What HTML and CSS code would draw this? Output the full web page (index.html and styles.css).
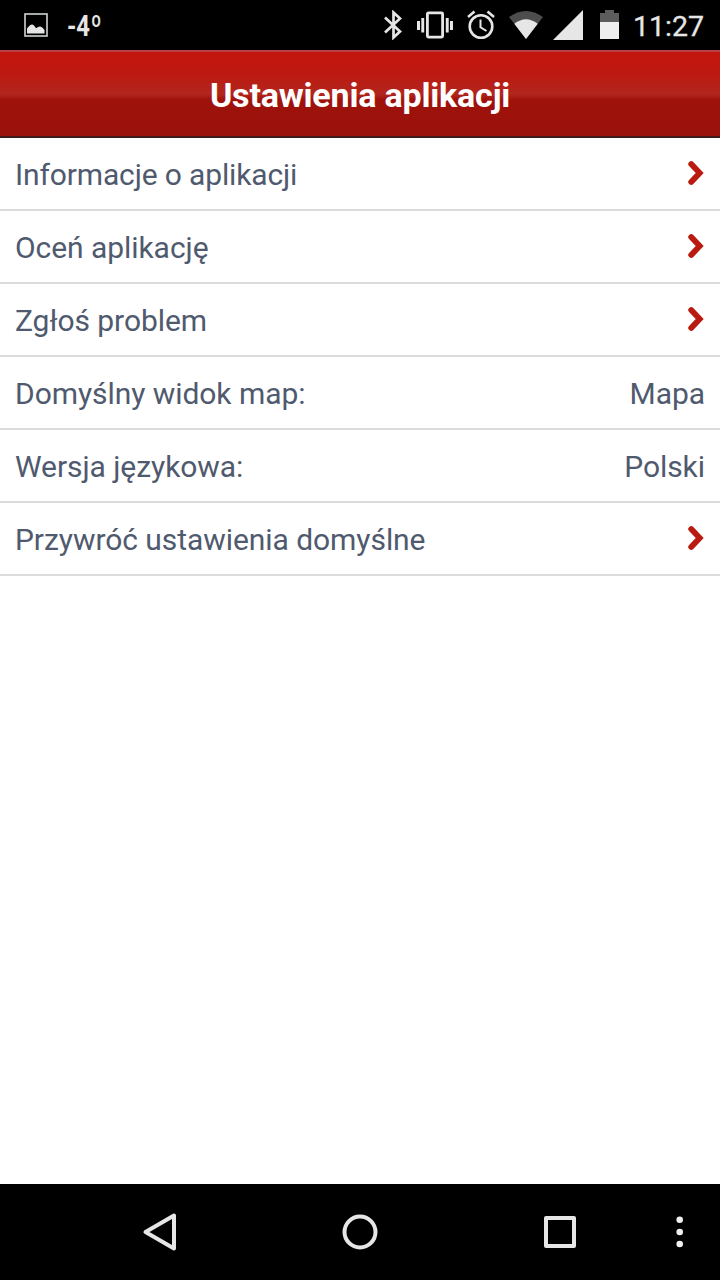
FILE: index.html
```html
<!DOCTYPE html>
<html lang="pl">
<head>
<meta charset="utf-8">
<title>Ustawienia aplikacji</title>
<link rel="stylesheet" href="styles.css">
</head>
<body>
<div class="screen">
  <div class="status">
    <div class="notifications">
      <svg class="icon" width="24" height="24" viewBox="0 0 24 24"><rect x="1" y="1" width="22" height="22" fill="none" stroke="#c4c8c4" stroke-width="1.7"/><path d="M3 20.500V15.500Q6 11.500 8 11.500T12 15.300Q15 13 17 13.800T20.500 17v3.500z" fill="#e6e6e6"/></svg>
      <span class="temp">-4<span class="degree">º</span></span>
    </div>
    <div class="system">
      <svg class="icon bluetooth" width="18" height="30" viewBox="0 0 18 30"><path d="M1 7.500l15 14-6.500 6V2.500l6.500 6-15 14" fill="none" stroke="#e6e6e6" stroke-width="2.700"/></svg>
      <svg class="icon vibrate" width="36" height="30" viewBox="0 0 36 30" fill="#e6e6e6"><rect x="10.400" y="2.900" width="15.200" height="24.200" rx="1" fill="none" stroke="#e6e6e6" stroke-width="2.800"/><path d="M0 11h3v9H0zM4.300 8h2.900v14.500H4.300zM28.800 8h2.900v14.500h-2.900zM33 11h3v9h-3z"/></svg>
      <svg class="icon alarm" width="28" height="30" viewBox="0 0 28 30" fill="none" stroke="#e6e6e6" stroke-width="2.600"><circle cx="14" cy="16.500" r="11.300"/><path d="M1 7l6.500-5.400M27 7l-6.500-5.400"/><path d="M13.500 9.500v7.800l6 3.700" stroke-width="2"/></svg>
      <svg class="icon wifi" width="34" height="30" viewBox="0 0 34 30"><path d="M0 7Q17-5 34 7L17 29z" fill="#4d4d4d"/><path d="M5.300 13.800Q17 4.500 28.700 13.800L17 29z" fill="#e6e6e6"/></svg>
      <svg class="icon signal" width="30" height="30" viewBox="0 0 30 30"><path d="M30 0v30H0z" fill="#e6e6e6"/></svg>
      <svg class="icon battery" width="19" height="30" viewBox="0 0 19 30"><path d="M0 3h5V0h9v3h5v9H0z" fill="#5c5c5c"/><path d="M0 12h19v17H0z" fill="#eee"/></svg>
      <span class="clock">11:27</span>
    </div>
  </div>
  <h1 class="header">Ustawienia aplikacji</h1>
  <ul class="list">
    <li class="row"><span class="tight">Informacje o aplikacji</span><svg class="chevron" width="18" height="26" viewBox="0 0 18 26"><path d="M4.200 4L12.700 13L4.200 22"/></svg></li>
    <li class="row"><span>Oceń aplikację</span><svg class="chevron" width="18" height="26" viewBox="0 0 18 26"><path d="M4.200 4L12.700 13L4.200 22"/></svg></li>
    <li class="row"><span>Zgłoś problem</span><svg class="chevron" width="18" height="26" viewBox="0 0 18 26"><path d="M4.200 4L12.700 13L4.200 22"/></svg></li>
    <li class="row"><span>Domyślny widok map:</span><span>Mapa</span></li>
    <li class="row"><span>Wersja językowa:</span><span>Polski</span></li>
    <li class="row"><span>Przywróć ustawienia domyślne</span><svg class="chevron" width="18" height="26" viewBox="0 0 18 26"><path d="M4.200 4L12.700 13L4.200 22"/></svg></li>
  </ul>
  <div class="nav">
    <svg width="40" height="40" viewBox="0 0 40 40"><path d="M5.500 20L34 3.500v33z"/></svg>
    <svg width="40" height="40" viewBox="0 0 40 40"><circle cx="20" cy="20" r="15.500"/></svg>
    <svg width="40" height="40" viewBox="0 0 40 40"><rect x="6" y="6" width="28" height="28"/></svg>
    <svg class="more" width="8" height="40" viewBox="0 0 8 40"><circle cx="3.700" cy="7.800" r="3.300"/><circle cx="3.700" cy="20" r="3.300"/><circle cx="3.700" cy="32" r="3.300"/></svg>
  </div>
</div>
</body>
</html>
```
FILE: styles.css
```css
* { box-sizing: border-box; }
body { margin: 0; background: #fff; font-family: Roboto, "Noto Sans", sans-serif; }
svg { display: block; flex: none; }
.screen { width: 720px; height: 1280px; display: flex; flex-direction: column; overflow: hidden; }
.status { flex: none; height: 50px; background: #000; color: #e6e6e6; display: flex; justify-content: space-between; padding: 0 16px 0 24px; }
.notifications, .system { display: flex; align-items: center; height: 50px; }
.temp { margin-left: 19px; padding-top: 1px; font-size: 29px; font-weight: 700; line-height: 50px; transform: scaleX(.82); transform-origin: left; }
.degree { margin-left: 1px; }
.vibrate { margin-left: 15px; }
.alarm { margin-left: 14px; }
.wifi { margin-left: 14px; }
.signal { margin-left: 10px; }
.battery { margin-left: 17px; }
.clock { width: 71px; margin-left: 14px; font-size: 28.5px; font-weight: 400; -webkit-text-stroke: .3px #e6e6e6; line-height: 50px; padding-top: 3px; white-space: nowrap; }
.header { flex: none; margin: 0; height: 88px; padding-top: 1px; border-top: 2px solid #b94049; border-bottom: 2px solid #401c1c; background: linear-gradient(#c3160c 0%, #bd1910 25%, #b1261d 50%, #9f120c 57%, #9b110b 100%); color: #fff; font-size: 34px; font-weight: 700; letter-spacing: -.18px; line-height: 84px; text-align: center; }
.list { flex: 1; margin: 0; padding: 0; list-style: none; background: #fff; }
.row { height: 73px; padding: 1px 15px 0; border-bottom: 2px solid #dcdcdc; display: flex; justify-content: space-between; align-items: center; color: #505a6e; font-size: 30px; letter-spacing: -.06px; }
.tight { letter-spacing: -.14px; }
.chevron { margin-top: -2px; fill: none; stroke: #b91b10; stroke-width: 5.8; stroke-linecap: round; }
.nav { flex: none; height: 96px; background: #000; display: flex; align-items: center; padding-left: 140px; gap: 160px; }
.nav svg { fill: none; stroke: #e6e6e6; stroke-width: 4; stroke-linejoin: round; }
.nav .more { margin-left: -64px; fill: #f0f0f0; stroke: none; }
```
